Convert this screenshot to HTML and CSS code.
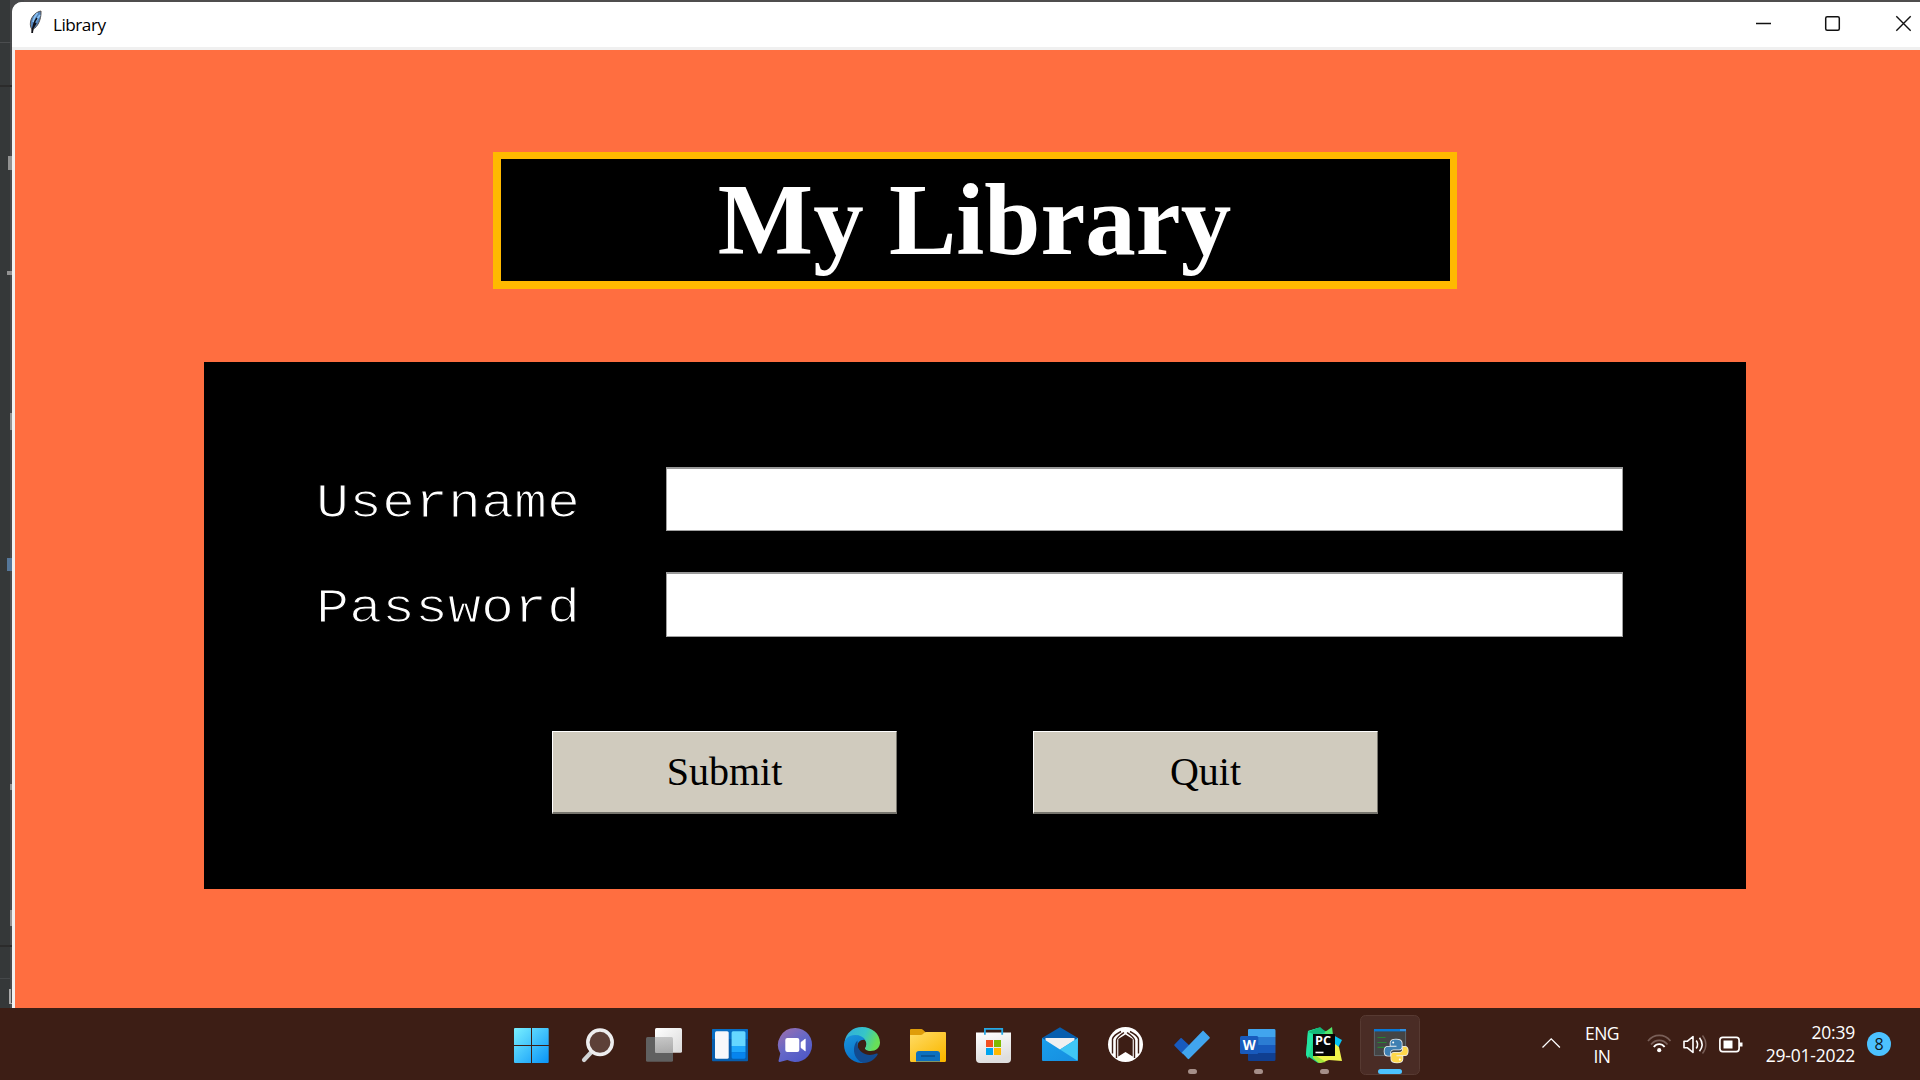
FILE: index.html
```html
<!DOCTYPE html>
<html lang="en">
<head>
<meta charset="utf-8">
<title>Library</title>
<link rel="stylesheet" href="styles.css">
</head>
<body>
<main class="desktop">
  <div class="editor-edge">
    <i class="speck line-a"></i><i class="speck line-b"></i><i class="speck tick-a"></i><i class="speck tick-b"></i><i class="speck tick-c"></i><i class="speck tick-d"></i><i class="speck tick-e"></i><i class="speck tick-f"></i><i class="speck line-c"></i><i class="speck line-d"></i><i class="speck tick-g"></i>
  </div>
  <section class="window">
    <header class="titlebar">
      <svg class="feather" width="16" height="26" viewBox="0 0 16 26"><path d="M13 1C8 2 3.500 6 2.500 12c-.5 3 .2 5.500 1.200 7L4 23l1.200-4C9 17.500 13.500 10 13 1Z" fill="#5384bd" stroke="#55504d" stroke-width="1"/><path d="M9.500 3C7 6 5.500 9 5 12M12 5 7 12" stroke="#8cc2f0" stroke-width="1.700" fill="none"/><path d="M9 8c-3 4-4.500 9-4.700 15M8 13l-3 5" stroke="#101018" stroke-width="1.500" fill="none"/></svg>
      <span class="caption">Library</span>
      <svg class="controls" width="170" height="45" viewBox="0 0 170 45" fill="none" stroke="#111"><path d="M6 21.500h15" stroke-width="1.300"/><rect x="75.700" y="14.700" width="13.600" height="13.600" rx="1.500" stroke-width="1.500"/><path d="m146.300 14.300 14.400 14.400m0-14.400-14.400 14.400" stroke-width="1.400"/></svg>
    </header>
    <div class="client">
      <h1 class="heading">My Library</h1>
      <form class="panel">
        <div class="fields">
          <label class="label" for="user">Username</label><input class="entry" id="user" type="text">
          <label class="label" for="pass">Password</label><input class="entry" id="pass" type="password">
        </div>
        <div class="actions"><button class="button" type="button">Submit</button><button class="button" type="button">Quit</button></div>
      </form>
    </div>
  </section>
</main>
<footer class="taskbar">
  <nav class="apps">
    <svg class="app" viewBox="0 0 66 72"><defs><linearGradient id="win" gradientUnits="userSpaceOnUse" x1="16" y1="20" x2="51" y2="55"><stop stop-color="#79f0ff"/><stop offset="1" stop-color="#0893f8"/></linearGradient></defs><path fill="url(#win)" d="M17 20h16v17H16V21a1 1 0 0 1 1-1Zm17 0h15.700a1 1 0 0 1 1 1v16H34ZM16 38h17v17H17a1 1 0 0 1-1-1Zm18 0h16.700v16a1 1 0 0 1-1 1H34Z"/></svg>
    <svg class="app" viewBox="0 0 66 72"><path d="M27 44.500 20 52" stroke="#d2d4d5" stroke-width="4.200" stroke-linecap="round"/><circle cx="36" cy="34.300" r="12.200" fill="#5d4038" stroke="#eeeeef" stroke-width="3.500"/></svg>
    <svg class="app" viewBox="0 0 66 72"><defs><linearGradient id="tv" x2="1" y2="1"><stop stop-color="#fff"/><stop offset="1" stop-color="#d9d9d9"/></linearGradient><linearGradient id="tv2" x2="0" y2="1"><stop stop-color="#b8b8b8"/><stop offset="1" stop-color="#969696"/></linearGradient></defs><rect x="16" y="29" width="27" height="24.700" rx="1.500" fill="#606060"/><rect x="25" y="20" width="27" height="24.700" rx="1.500" fill="url(#tv)"/><path d="M25 29h16.500a1.500 1.500 0 0 1 1.500 1.500v14.200H26.500a1.500 1.500 0 0 1-1.500-1.500Z" fill="url(#tv2)" opacity=".75"/></svg>
    <svg class="app" viewBox="0 0 66 72"><rect x="16" y="21" width="36" height="32.300" rx="1" fill="#075eae"/><path d="M17 21h34a1 1 0 0 1 1 1v9H16v-9a1 1 0 0 1 1-1Z" fill="#0878d0" opacity=".6"/><rect x="19" y="23.300" width="13.700" height="27.400" rx="1.500" fill="#f7f8fb"/><path d="M37 23.300h11a1.500 1.500 0 0 1 1.500 1.500V38H35.600V24.800a1.500 1.500 0 0 1 1.400-1.500Z" fill="#66d7ff"/><path d="M35.600 38h13.900v6.300H35.600Z" fill="#1fa7fb"/><path d="M35.600 44.300h13.900v5a1.400 1.400 0 0 1-1.500 1.400H37a1.400 1.400 0 0 1-1.400-1.400Z" fill="#0684ee"/></svg>
    <svg class="app" viewBox="0 0 66 72"><defs><linearGradient id="chat" x1=".1" y1="0" x2=".8" y2="1"><stop stop-color="#9c6fae"/><stop offset=".5" stop-color="#6568c8"/><stop offset="1" stop-color="#4d57c7"/></linearGradient></defs><path d="M33.300 20a17 17 0 1 1-8 32.100l-7.500 1.800c-.9.200-1.500-.4-1.200-1.300l1.700-7A17 17 0 0 1 33.300 20Z" fill="url(#chat)"/><rect x="23.300" y="30" width="14" height="14" rx="2" fill="#fff"/><path d="m39 34.300 4.300-3.300v12L39 39.700Z" fill="#fff" stroke="#fff" stroke-width=".6"/></svg>
    <svg class="app" viewBox="0 0 66 72"><defs><linearGradient id="e1" x2="1" y2=".3"><stop stop-color="#30a9df"/><stop offset=".6" stop-color="#36c5c8"/><stop offset="1" stop-color="#68df58"/></linearGradient><linearGradient id="e2" x2=".4" y2="1"><stop stop-color="#1a94dc"/><stop offset="1" stop-color="#0870c9"/></linearGradient></defs><path d="M16.500 34C18 25 25 19 34 19c10 0 18 7 18 15.500 0 5-4 8.500-9.500 8.500-4 0-6-1.500-5.500-3 2.700-4 1-8.500-3-10-6-2-13-2-17.500 4Z" fill="url(#e1)"/><path d="M16 37c0-6 5-10 11-10 5 0 8.500 2 10.500 5-5-1-8 2-8 7 0 6 4.500 11.500 11 12.500-2 2-4.500 3.500-7 3.500C23 54.500 16 46 16 37Z" fill="url(#e2)"/><path d="M29.500 32.500C25 37 25 45 28.500 50c2.200 3.200 5 4.900 7.500 4.900 6 0 11-3.900 13.700-8.500.2-.7-.5-1.200-1.200-.9-8 3.500-16.500.3-19-7.500Z" fill="#124b91"/><circle cx="33.700" cy="37" r="3.500" fill="#3d1e15"/><path d="M35 32.500c3 2 3.500 5 1.900 7.500-.4 1.500 1 3 5 3-5 2.700-11-.1-11.400-5.500Z" fill="#3d1e15"/></svg>
    <svg class="app" viewBox="0 0 66 72"><defs><linearGradient id="fold" x2=".8" y2="1"><stop stop-color="#ffdc67"/><stop offset="1" stop-color="#fab800"/></linearGradient></defs><path d="M17 21h10.500c1.500 0 2.500 2.500 4 3v5H16v-7a1 1 0 0 1 1-1Z" fill="#df9d0a"/><path d="M16 27h11c2 0 3-3 5-3h19a1 1 0 0 1 1 1v27.500a1.500 1.500 0 0 1-1.500 1.500h-33a1.500 1.500 0 0 1-1.500-1.500Z" fill="url(#fold)"/><path d="M22 53.500V46a3 3 0 0 1 3-3h18a3 3 0 0 1 3 3v7.500Z" fill="#0d70be"/><path d="M27 48h14" stroke="#084a84" stroke-width="1.300"/></svg>
    <svg class="app" viewBox="0 0 66 72"><defs><linearGradient id="bag" x2=".3" y2="1"><stop stop-color="#fff"/><stop offset="1" stop-color="#dedede"/></linearGradient></defs><path d="M16 24.500h35V51a4 4 0 0 1-4 4H20a4 4 0 0 1-4-4Z" fill="url(#bag)"/><path d="M24.900 26.700v-5.900h17.300v5.900" fill="none" stroke="#26a9e6" stroke-width="1.800"/><path d="M26 32h7v7h-7Z" fill="#f25022"/><path d="M34 32h7v7h-7Z" fill="#7fba00"/><path d="M26 40h7v7h-7Z" fill="#00a4ef"/><path d="M34 40h7v7h-7Z" fill="#ffb900"/></svg>
    <svg class="app" viewBox="0 0 66 72"><defs><linearGradient id="mail" x2="1" y2="1"><stop stop-color="#1a9eea"/><stop offset="1" stop-color="#168ee0"/></linearGradient></defs><path d="M16 30 34 19.300 52 30v6H16Z" fill="#075eae"/><path d="M19.500 30h29v8L34 43 19.500 38Z" fill="#f0f0f0"/><path d="M16 30v22a1 1 0 0 0 1 1h34a1 1 0 0 0 1-1V30L34 41.500Z" fill="url(#mail)"/><path d="M52 30 34 41.500 51.500 52.700Z" fill="#40c7f5"/></svg>
    <svg class="app" viewBox="0 0 66 72"><circle cx="33.500" cy="36.500" r="17.500" fill="#fff"/><path d="M29 23.500c-4 2-7.500 4.500-8.500 7.500v14.500M38 23.500c4 2 7.500 4.500 8.500 7.500v14.500M32 24.500c-3 2-7 4.500-7.500 7.500v18M35 24.500c3 2 7 4.500 7.500 7.500v18" fill="none" stroke="#3d1e15" stroke-width="1.400"/><path d="M33.500 26.500 40.700 31v17.500l-7.200-4.500-7.200 4.500V31Z" fill="#3d1e15"/></svg>
    <svg class="app" viewBox="0 0 66 72"><path d="m16.500 36.500 6-6.200c.4-.4.8-.4 1.200 0l8.300 7.700-7 8.500-8.500-8.700c-.4-.5-.4-.9 0-1.300Z" fill="#185abd"/><path d="m23.800 44.400 20.500-21.200c.5-.6 1-.6 1.500 0l5.700 5.800c.5.500.5 1 0 1.500L31.200 50.800c-.5.600-1 .6-1.500 0Z" fill="#41a5ee"/><rect class="running" x="30" y="61" width="9" height="5" rx="2.500"/></svg>
    <svg class="app" viewBox="0 0 66 72"><path d="M25 21h25a1.500 1.500 0 0 1 1.500 1.500V29H24v-7a1 1 0 0 1 1-1Z" fill="#41a5ee"/><path d="M24 29h27.500v8H24Z" fill="#2b7cd3"/><path d="M24 37h27.500v8H24Z" fill="#185abd"/><path d="M24 45h27.500v6.500A1.500 1.500 0 0 1 50 53H25a1 1 0 0 1-1-1Z" fill="#103f91"/><rect x="16" y="28" width="18.300" height="18" rx="1.500" fill="#185abd"/><text class="word-mark" x="25.200" y="41.700" text-anchor="middle">W</text><rect class="running" x="30" y="61" width="9" height="5" rx="2.500"/></svg>
    <svg class="app" viewBox="0 0 66 72"><path d="m18 23 10-3 7 3 6 1 2 26-15 5-12-8Z" fill="#21d789"/><path d="m18 23 10-3-5 12-5 19-2-4Z" fill="#22e5a0"/><path d="m30 19 6 5-10 3-8-3Z" fill="#14b878"/><path d="m35 24 7-5 1 8-9 3Z" fill="#52e56a"/><path d="m43 27 9 5-7 14Z" fill="#07c3f2"/><path d="m45 36 4 3 3 14-13-1-9 3-7-8Z" fill="#f0f54a"/><path d="m23 46 13 8-7 1-6-5Z" fill="#a2e83b"/><rect x="23" y="26" width="22" height="22" fill="#050505"/><text class="pc-mark" x="25" y="37.200" textLength="16" lengthAdjust="spacingAndGlyphs">PC</text><path d="M25.500 44.500h8" stroke="#fff" stroke-width="1.600"/><rect class="running" x="30" y="61" width="9" height="5" rx="2.500"/></svg>
    <svg class="app" viewBox="0 0 66 72"><rect x="4.500" y="7.500" width="59" height="59" rx="5" fill="#4a2c25" stroke="#573a32"/><path d="M18 21h32v27H18Z" fill="#444"/><path d="M18.400 22v25.600h31.200V22" fill="none" stroke="#66717a" stroke-width=".8"/><path d="M18 21h32v2.400H18Z" fill="#0878d7"/><path d="M44.500 22h1m1 0h1m1 0h1" stroke="#d8edff" stroke-width=".8"/><path d="M21.500 29.500h8m-8 5h9m-9 4.800h7" stroke="#298332" stroke-width="1.200"/><g stroke="#eee" stroke-width="1.600" paint-order="stroke"><path d="M40 31.500c-4 0-5.500 1.300-5.500 3.500v2.700h6v1H32c-2.500 0-3.500 2-3.500 4.600s1.200 4.400 3.200 4.400h2.500V45c0-2 1.500-3.500 3.500-3.500h5.500c1.500 0 2.500-1.300 2.500-2.700V35c0-2.200-2-3.500-5.700-3.500Z" fill="#3e7fb2"/><path d="M41 54.500c4 0 5.500-1.300 5.500-3.500v-2.700h-6v-1H49c2 0 2.800-2 2.800-4.600s-.9-4-2.900-4h-2v2.500c0 2-1.500 3.500-3.500 3.500H38c-1.700 0-2.700 1.300-2.700 2.800V51c0 2.200 2 3.500 5.700 3.500Z" fill="#ffd84b"/></g><circle cx="37.200" cy="34.500" r="1" fill="#fff"/><circle cx="43.800" cy="51.500" r="1" fill="#fff"/><rect x="22" y="61" width="24" height="5" rx="2.500" fill="#4cc2ff"/></svg>
  </nav>
  <div class="tray">
    <svg class="chevron" width="20" height="12" viewBox="0 0 20 12"><path d="m1.500 10.500 8.700-8.700 8.700 8.700" fill="none" stroke="#fff" stroke-width="1.300"/></svg>
    <div class="language"><span>ENG</span><span>IN</span></div>
    <svg class="status" width="100" height="24" viewBox="0 0 100 24" fill="none"><path d="M2 9c6-7.500 16.500-7.500 22.500 0M5 12.500c4.500-5.500 12-5.500 16.500 0" stroke="#795f58" stroke-width="1.700"/><path d="M7.800 15c3-3.800 7.800-3.800 10.800 0" stroke="#fff" stroke-width="1.900"/><circle cx="13.200" cy="18.200" r="2.100" fill="#fff"/><path d="M38 9.200h3.500L47 4.500v16l-5.500-4.700H38Z" stroke="#fff" stroke-width="1.600" stroke-linejoin="round"/><path d="M50.200 8.500c1.800 2.500 1.800 5.500 0 8M53.500 5.700c3.300 4.300 3.300 9.300 0 13.600" stroke="#fff" stroke-width="1.600"/><path d="M56.500 3.500c4.500 5.500 4.500 12.500 0 18" stroke="#795f58" stroke-width="1.400"/><rect x="73.900" y="5.400" width="19.200" height="14.200" rx="2.800" stroke="#fff" stroke-width="1.700"/><path d="M77.500 8.500h9v8h-9ZM93.500 10.500h3v4h-3Z" fill="#fff"/></svg>
    <div class="clock"><span>20:39</span><span>29-01-2022</span></div>
    <span class="badge">8</span>
  </div>
</footer>
</body>
</html>
```
FILE: styles.css
```css
* { box-sizing: border-box; }
body { margin: 0; width: 1920px; height: 1080px; overflow: hidden; display: flex; flex-direction: column; font-family: "Open Sans", "Noto Sans", sans-serif; }

.desktop { height: 1008px; display: flex; padding-top: 2px; background: linear-gradient(90deg, #353839 10px, #48494b 10px, #48494b 24px, #4f4d4e 24px); }
.editor-edge { position: relative; width: 12px; flex: none; }
.speck { position: absolute; right: 0; background: #929292; }
.line-a { top: 40px; width: 12px; height: 1px; background: #4b4d4f; }
.line-b { top: 83px; width: 12px; height: 2px; background: #2b2b2b; }
.tick-a { top: 154px; width: 4px; height: 14px; }
.tick-b { top: 269px; width: 5px; height: 4px; }
.tick-c { top: 411px; width: 2px; height: 17px; }
.tick-d { top: 556px; width: 5px; height: 13px; background: #55779a; }
.tick-e { top: 782px; width: 2px; height: 6px; }
.tick-f { top: 908px; width: 2px; height: 16px; }
.line-c { top: 943px; width: 12px; height: 2px; background: #2b2b2b; }
.line-d { top: 976px; width: 12px; height: 1px; background: #45484a; }
.tick-g { top: 987px; width: 3px; height: 15px; background: transparent; border: solid #aaa; border-width: 0 0 1px 2px; }

.window { flex: 1; display: flex; flex-direction: column; background: #f0f0f0; border-radius: 10px 0 0 0; overflow: hidden; }
.titlebar { height: 45px; background: #fff; display: flex; align-items: flex-start; }
.feather { margin: 8px 0 0 16px; }
.caption { margin-left: 9px; font-size: 17.2px; line-height: 45px; letter-spacing: -0.5px; color: #000; }
.controls { margin-left: auto; }
.client { flex: 1; margin: 3px 0 0 3px; background: #ff6e40; display: flex; flex-direction: column; align-items: center; }

.heading { margin: 102px 0 0 15px; width: 964px; height: 137px; border: solid #ffb900; border-width: 7px 7px 8px 8px; background: #000; color: #fff; text-align: center; font: bold 101px/123px "Liberation Serif", serif; text-indent: -2px; }
.panel { margin: 73px 0 0 15px; width: 1542px; height: 527px; padding-top: 105px; background: #000; }
.fields { display: grid; grid-template-columns: 350px 957px; grid-template-rows: 64px 65px; row-gap: 41px; margin-left: 112px; }
.label { width: max-content; font: 48px/74px "Liberation Mono", monospace; color: #fff; -webkit-text-stroke: 1.200px #000; transform: scaleX(1.146); transform-origin: left; }
.entry { width: 957px; padding: 0 6px; background: #fff; border: 1px solid #a0a0a0; border-top: 2px solid #999; border-radius: 0; font: 40px "Liberation Serif", serif; outline: none; }
.actions { display: flex; gap: 136px; margin: 94px 0 0 348px; }
.button { width: 345px; height: 83px; padding: 0; background: #d0cbbe; border: solid; border-width: 1px 1px 2px; border-color: #fff #77756e #77756e #fff; border-radius: 0; color: #000; font: 40px/78px "Liberation Serif", serif; }

.taskbar { height: 72px; display: flex; background: #3d1e15; }
.apps { display: flex; margin-left: 498px; }
.app { width: 66px; height: 72px; flex: none; }
.running { fill: #a58f89; }
.word-mark { font: bold 13.500px "Open Sans", sans-serif; fill: #fff; }
.pc-mark { font: bold 12.500px "Open Sans", sans-serif; fill: #fff; }
.tray { flex: 1; display: flex; color: #fff; font-size: 17.500px; line-height: 23px; }
.chevron { margin: 29px 0 0 119px; }
.language { width: 60px; margin: 14px 0 0 11px; display: flex; flex-direction: column; align-items: center; letter-spacing: -0.5px; }
.status { margin: 24px 0 0 14px; }
.clock { width: 109px; margin-top: 13px; display: flex; flex-direction: column; align-items: flex-end; letter-spacing: -0.2px; }
.badge { width: 24px; height: 24px; margin: 24px 0 0 12px; border-radius: 50%; background: #4cc2ff; color: #101820; text-align: center; font-size: 16px; line-height: 24px; }
```
